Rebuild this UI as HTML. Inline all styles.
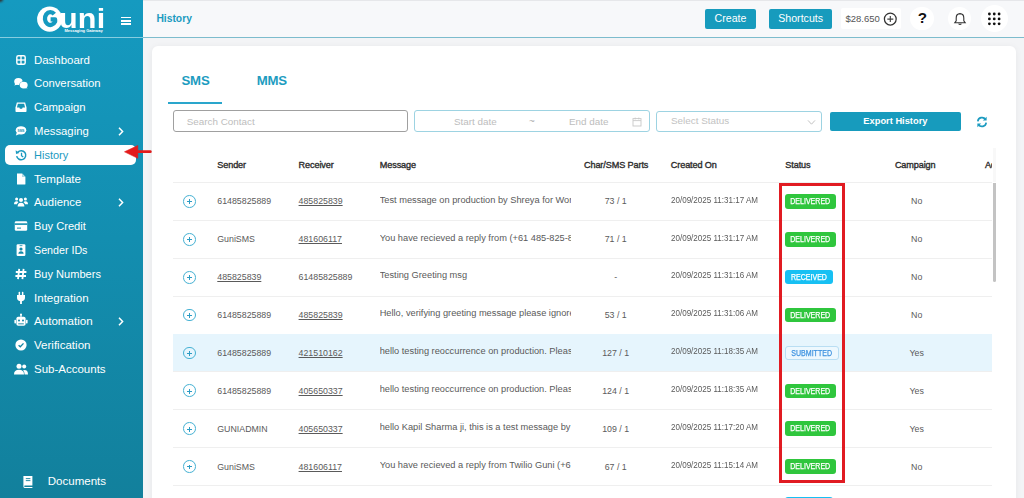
<!DOCTYPE html>
<html><head><meta charset="utf-8">
<style>

*{margin:0;padding:0;box-sizing:border-box}
html,body{width:1024px;height:498px;overflow:hidden;background:#f3f4f6;font-family:"Liberation Sans",sans-serif}
.a{position:absolute}
#side{position:absolute;left:0;top:0;width:143.3px;height:498px;background:linear-gradient(180deg,#159ac0 0%,#138eb0 48%,#12809c 100%)}
#side .hl{position:absolute;left:0;top:37px;width:143.3px;height:1px;background:#86cde0}
.mi{position:absolute;left:34px;height:16px;line-height:16px;font-size:11.3px;color:#fff;white-space:nowrap}
.ic{position:absolute;left:13px;width:16px;height:16px}
.chev{position:absolute;left:117px;width:8px;height:9px}
#top{position:absolute;left:143.3px;top:0;width:880.7px;height:37px;background:#f7f8fa;border-top:1px solid #e6e7ea}
#topline{position:absolute;left:143.3px;top:37px;width:880.7px;height:1px;background:#7dbccd}
.btn{position:absolute;background:#179bbd;color:#fff;border-radius:2px;font-size:10.6px;text-align:center}
#card{position:absolute;left:152px;top:46.2px;width:864px;height:470px;background:#fff;border-radius:6px;box-shadow:0 1px 7px rgba(0,0,0,.06)}
.th{position:absolute;top:157px;height:16px;line-height:16px;font-size:9.1px;color:#2b2b2b;white-space:nowrap;letter-spacing:-0.1px;-webkit-text-stroke:0.35px #2b2b2b}
.td{position:absolute;height:14px;line-height:14px;font-size:8.8px;color:#5a5a5a;white-space:nowrap}
.u{text-decoration:underline;text-underline-offset:1px}
.rb{position:absolute;left:172.7px;width:819.8px;height:1px;background:#efefef}
.badge{position:absolute;left:785.2px;height:14.6px;line-height:15.6px;border-radius:3px;font-size:8.2px;color:#fff;text-align:center;white-space:nowrap}
.badge span{display:inline-block;transform:scaleX(.86);-webkit-text-stroke:0.25px currentColor}
.del{background:#2fc63d;width:50.4px}
.rec{background:#17c0f3;width:48px}
.sub{background:#edf8fe;border:1px solid #b9def3;color:#3f93e0;width:53.6px;line-height:13.6px}
.exp{position:absolute;left:183px;width:12.7px;height:12.7px;border:1px solid #45b1d3;border-radius:50%}
.exp:before{content:"";position:absolute;left:5.2px;top:3.4px;width:1px;height:4.8px;background:#2d9cc4}
.exp:after{content:"";position:absolute;left:3.4px;top:5.2px;width:4.8px;height:1px;background:#2d9cc4}

</style></head><body>
<div id="side"><div class="hl"></div>
<div class="a" style="left:-4px;top:-4px;width:6.5px;height:5.5px;border-radius:50%;background:#333;filter:blur(0.8px)"></div>
<svg class="a" style="left:34px;top:3px" width="32" height="32" viewBox="0 0 32 32"><circle cx="15.7" cy="16.1" r="12.6" fill="#fff"/><path d="M20.3 11.2 A5.4 6.4 0 1 0 21.1 18.6 V16.4 H16.6" fill="none" stroke="#159ac0" stroke-width="4.3" stroke-linejoin="round"/></svg>
<div class="a" style="left:59.4px;top:0.9px;font-size:27px;line-height:36px;font-weight:bold;color:#fff;letter-spacing:0.2px;transform:scaleX(1.13);transform-origin:0 0">uni</div>
<div class="a" style="left:64.4px;top:27.6px;font-size:4.0px;line-height:5px;font-weight:bold;color:#fff;white-space:nowrap;letter-spacing:0px">Messaging Gateway</div>
<div class="a" style="left:121px;top:16.6px;width:10px;height:1.6px;background:#fff"></div>
<div class="a" style="left:121px;top:20.0px;width:10px;height:1.6px;background:#fff"></div>
<div class="a" style="left:121px;top:23.4px;width:10px;height:1.6px;background:#fff"></div>

<svg class="a" style="left:13px;top:51.6px" width="16" height="16" viewBox="0 0 16 16"><g transform="translate(8 8) scale(0.95) translate(-8 -8)"><rect x="3.6" y="3.6" width="8.8" height="8.8" rx="1.6" fill="none" stroke="#fff" stroke-width="1.5"/><rect x="7.3" y="3.6" width="1.4" height="8.8" fill="#fff"/><rect x="3.6" y="7.3" width="8.8" height="1.4" fill="#fff"/></g></svg>
<div class="mi" style="top:51.6px;color:#fff;font-size:11.45px">Dashboard</div>
<svg class="a" style="left:13px;top:75.4px" width="16" height="16" viewBox="0 0 16 16"><g transform="translate(8 8) scale(1) translate(-8 -8)"><ellipse cx="5.4" cy="6.6" rx="4.2" ry="3.5" fill="#fff"/><path d="M2.4 8.4 L1.3 10.4 L4.6 9.6Z" fill="#fff"/><ellipse cx="10.7" cy="10.1" rx="4.5" ry="3.8" fill="#1595b7"/><ellipse cx="10.7" cy="10.1" rx="4" ry="3.4" fill="#fff"/><path d="M13.2 12 L14.7 13.3 L11.6 13.2Z" fill="#fff"/></g></svg>
<div class="mi" style="top:75.4px;color:#fff;font-size:11.3px">Conversation</div>
<svg class="a" style="left:13px;top:99.2px" width="16" height="16" viewBox="0 0 16 16"><g transform="translate(8 8) scale(0.92) translate(-8 -8)"><path d="M3.5 3.2 H12.5 L14 8.6 V12.6 Q14 13.4 13.2 13.4 H2.8 Q2 13.4 2 12.6 V8.6 Z" fill="#fff"/><path d="M4.6 4.6 H11.4 L12.4 8.6 H9.8 L9.2 9.9 H6.8 L6.2 8.6 H3.6 Z" fill="#1594b5"/></g></svg>
<div class="mi" style="top:99.2px;color:#fff;font-size:11.3px">Campaign</div>
<svg class="a" style="left:13px;top:123.0px" width="16" height="16" viewBox="0 0 16 16"><g transform="translate(8 8) scale(0.88) translate(-8 -8)"><ellipse cx="8" cy="7.2" rx="6" ry="4.7" fill="#fff"/><path d="M3.2 9.6 L2.2 13 L6.4 11.4Z" fill="#fff"/><text x="8" y="8.6" font-size="3.6" font-weight="bold" fill="#1593b4" text-anchor="middle" font-family="Liberation Sans">SMS</text></g></svg>
<div class="mi" style="top:123.0px;color:#fff;font-size:11.33px">Messaging</div>
<svg class="a" style="left:116px;top:125.5px" width="10" height="11" viewBox="0 0 10 11"><path d="M3 1.8 L6.6 5.5 L3 9.2" stroke="#fff" stroke-width="1.5" fill="none"/></svg>
<div class="a" style="left:5px;top:144.8px;width:130.6px;height:19.9px;background:#fff;border-radius:5px"></div>
<svg class="a" style="left:13px;top:146.8px" width="16" height="16" viewBox="0 0 16 16"><g transform="translate(8 8) scale(0.86) translate(-8 -8)"><path d="M4.2 4.8 A5.3 5.3 0 1 1 3 9.2" fill="none" stroke="#1b9abf" stroke-width="1.7"/><path d="M1.8 2.6 L2.2 6.8 L6.2 5.6Z" fill="#1b9abf"/><path d="M8.6 5.4 V8.8 L10.6 10.4" fill="none" stroke="#1b9abf" stroke-width="1.5"/></g></svg>
<div class="mi" style="top:146.8px;color:#1b9abf;font-size:11.0px">History</div>
<svg class="a" style="left:13px;top:170.6px" width="16" height="16" viewBox="0 0 16 16"><g transform="translate(8 8) scale(1) translate(-8 -8)"><path d="M4 2.5 H9.2 L12.4 5.7 V13 Q12.4 13.6 11.8 13.6 H4.6 Q4 13.6 4 13 Z" fill="#fff"/><path d="M9 2.5 V6 H12.4" fill="#1594b5" opacity="0.35"/></g></svg>
<div class="mi" style="top:170.6px;color:#fff;font-size:11.6px">Template</div>
<svg class="a" style="left:13px;top:194.4px" width="16" height="16" viewBox="0 0 16 16"><g transform="translate(8 8) scale(1) translate(-8 -8)"><circle cx="8" cy="6" r="2" fill="#fff"/><circle cx="3.6" cy="5" r="1.5" fill="#fff"/><circle cx="12.4" cy="5" r="1.5" fill="#fff"/><path d="M4.6 12.6 Q4.6 8.7 8 8.7 Q11.4 8.7 11.4 12.6Z" fill="#fff"/><path d="M1 10.2 Q1 7.2 3.6 7.2 Q5 7.2 5.4 8.2 Q4 9.2 4 10.2Z" fill="#fff"/><path d="M15 10.2 Q15 7.2 12.4 7.2 Q11 7.2 10.6 8.2 Q12 9.2 12 10.2Z" fill="#fff"/></g></svg>
<div class="mi" style="top:194.4px;color:#fff;font-size:11.32px">Audience</div>
<svg class="a" style="left:116px;top:196.9px" width="10" height="11" viewBox="0 0 10 11"><path d="M3 1.8 L6.6 5.5 L3 9.2" stroke="#fff" stroke-width="1.5" fill="none"/></svg>
<svg class="a" style="left:13px;top:218.2px" width="16" height="16" viewBox="0 0 16 16"><g transform="translate(8 8) scale(1) translate(-8 -8)"><rect x="1.8" y="3.2" width="12.4" height="9.6" rx="1.4" fill="#fff"/><rect x="1.8" y="5.3" width="12.4" height="1.6" fill="#138ead"/><rect x="4" y="9.6" width="4" height="1" fill="#138ead"/></g></svg>
<div class="mi" style="top:218.2px;color:#fff;font-size:11.1px">Buy Credit</div>
<svg class="a" style="left:13px;top:242.0px" width="16" height="16" viewBox="0 0 16 16"><g transform="translate(8 8) scale(1) translate(-8 -8)"><rect x="3.6" y="2.2" width="8.8" height="11.8" rx="1.2" fill="#fff"/><circle cx="8" cy="7" r="1.6" fill="#128aa8"/><path d="M5.4 11.8 Q5.4 9.2 8 9.2 Q10.6 9.2 10.6 11.8Z" fill="#128aa8"/><rect x="6.6" y="3.3" width="2.8" height="0.8" fill="#128aa8"/></g></svg>
<div class="mi" style="top:242.0px;color:#fff;font-size:10.7px">Sender IDs</div>
<svg class="a" style="left:13px;top:265.8px" width="16" height="16" viewBox="0 0 16 16"><g transform="translate(8 8) scale(1) translate(-8 -8)"><path d="M6.2 2.8 L5 13.2 M10.6 2.8 L9.4 13.2 M2.8 6 H13.4 M2.4 10 H13" stroke="#fff" stroke-width="1.8" fill="none"/></g></svg>
<div class="mi" style="top:265.8px;color:#fff;font-size:11.05px">Buy Numbers</div>
<svg class="a" style="left:13px;top:289.6px" width="16" height="16" viewBox="0 0 16 16"><g transform="translate(8 8) scale(1) translate(-8 -8)"><rect x="5.6" y="1.8" width="1.5" height="3.6" rx="0.6" fill="#fff"/><rect x="8.9" y="1.8" width="1.5" height="3.6" rx="0.6" fill="#fff"/><path d="M4 5 H12 V7.6 Q12 10.8 8.9 11.2 V14 H7.1 V11.2 Q4 10.8 4 7.6Z" fill="#fff"/></g></svg>
<div class="mi" style="top:289.6px;color:#fff;font-size:11.55px">Integration</div>
<svg class="a" style="left:13px;top:313.4px" width="16" height="16" viewBox="0 0 16 16"><g transform="translate(8 8) scale(1) translate(-8 -8)"><rect x="7.3" y="1.2" width="1.4" height="2.6" fill="#fff"/><circle cx="8" cy="1.6" r="1" fill="#fff"/><rect x="3.4" y="3.8" width="9.2" height="9" rx="1.8" fill="#fff"/><rect x="1.4" y="6.8" width="1.6" height="3.6" rx="0.6" fill="#fff"/><rect x="13" y="6.8" width="1.6" height="3.6" rx="0.6" fill="#fff"/><circle cx="6" cy="7.4" r="1" fill="#1287a5"/><circle cx="10" cy="7.4" r="1" fill="#1287a5"/><rect x="5.2" y="10.4" width="5.6" height="0.9" fill="#1287a5"/></g></svg>
<div class="mi" style="top:313.40000000000003px;color:#fff;font-size:11.6px">Automation</div>
<svg class="a" style="left:116px;top:315.90000000000003px" width="10" height="11" viewBox="0 0 10 11"><path d="M3 1.8 L6.6 5.5 L3 9.2" stroke="#fff" stroke-width="1.5" fill="none"/></svg>
<svg class="a" style="left:13px;top:337.2px" width="16" height="16" viewBox="0 0 16 16"><g transform="translate(8 8) scale(1) translate(-8 -8)"><circle cx="8" cy="8" r="5.6" fill="#fff"/><path d="M5.6 8.2 L7.3 9.8 L10.5 6.4" stroke="#1285a2" stroke-width="1.3" fill="none"/></g></svg>
<div class="mi" style="top:337.20000000000005px;color:#fff;font-size:11.55px">Verification</div>
<svg class="a" style="left:13px;top:361.0px" width="16" height="16" viewBox="0 0 16 16"><g transform="translate(8 8) scale(1) translate(-8 -8)"><circle cx="6" cy="5.2" r="2.5" fill="#fff"/><circle cx="11.2" cy="5.6" r="2" fill="#fff"/><path d="M1 13.4 Q1 8.8 6 8.8 Q11 8.8 11 13.4Z" fill="#fff"/><path d="M11.6 13.4 Q11.6 10.6 10 9.4 Q10.6 9 11.4 9 Q15 9 15 13.4Z" fill="#fff"/></g></svg>
<div class="mi" style="top:361.00000000000006px;color:#fff;font-size:11.5px">Sub-Accounts</div>
<svg class="a" style="left:19.5px;top:473.5px" width="16" height="16" viewBox="0 0 16 16"><g transform="translate(8 8) scale(1) translate(-8 -8)"><path d="M3.4 2 H12.4 V11.4 H4.8 Q4.2 11.4 4.2 12.2 Q4.2 13 4.8 13 H12.4 V14 H4.6 Q3.4 14 3.4 12.6Z" fill="#fff"/><rect x="5.8" y="4.2" width="4.6" height="0.9" fill="#12809c"/><rect x="5.8" y="6.2" width="4.6" height="0.9" fill="#12809c"/></g></svg>
<div class="mi" style="left:47.7px;top:473.1px;font-size:11.55px">Documents</div>
</div>
<svg class="a" style="left:120px;top:140px" width="36" height="24" viewBox="0 0 36 24"><path d="M4.5 11.8 L17.8 5.5 L17.8 18.3 Z" fill="#e31b1b" stroke="#e31b1b" stroke-width="0.6" stroke-linejoin="round"/><path d="M17 11.65 H30.3" stroke="#e31b1b" stroke-width="2.9" stroke-linecap="round"/></svg>
<div id="top"></div><div id="topline"></div>
<div class="a" style="left:156.4px;top:11.2px;font-size:10.3px;line-height:16px;font-weight:bold;color:#1c9bc0">History</div>
<div class="btn" style="left:705px;top:8.8px;width:51px;height:19.8px;line-height:19.8px">Create</div>
<div class="btn" style="left:769px;top:8.8px;width:63.3px;height:19.8px;line-height:19.8px">Shortcuts</div>
<div class="a" style="left:841px;top:8.3px;width:60px;height:21px;background:#fff;border-radius:2px"></div>
<div class="a" style="left:845.4px;top:10.5px;font-size:9.5px;line-height:16px;color:#555">$28.650</div>
<svg class="a" style="left:883px;top:11.6px" width="15" height="15" viewBox="0 0 15 15"><circle cx="7.3" cy="7.1" r="5.9" fill="none" stroke="#333" stroke-width="1.25"/><path d="M7.3 4.1 V10.1 M4.3 7.1 H10.3" stroke="#444" stroke-width="1.15"/></svg>
<div class="a" style="left:910.4px;top:6.8px;width:23.4px;height:23.4px;border-radius:50%;background:#fff"></div>
<div class="a" style="left:910.6px;top:9.4px;width:23.4px;text-align:center;font-size:15.2px;line-height:18px;font-weight:bold;color:#111">?</div>
<div class="a" style="left:947.6px;top:6.6px;width:23.6px;height:23.6px;border-radius:50%;background:#fff"></div>
<svg class="a" style="left:952.6px;top:11.6px" width="14" height="14" viewBox="0 0 14 14"><path d="M7 1.6 Q3.2 1.8 3.2 6 V8.8 L1.8 10.8 H12.2 L10.8 8.8 V6 Q10.8 1.8 7 1.6Z" fill="none" stroke="#333" stroke-width="1.1"/><path d="M5.6 11.6 Q7 13.4 8.4 11.6" fill="none" stroke="#333" stroke-width="1.1"/></svg>
<div class="a" style="left:980.8px;top:5.1px;width:27px;height:27px;border-radius:50%;background:#fff"></div>

<svg class="a" style="left:980px;top:4px" width="28" height="28" viewBox="0 0 28 28"><circle cx="9.40" cy="10.00" r="1.4" fill="#111"/><circle cx="14.25" cy="10.00" r="1.4" fill="#111"/><circle cx="19.10" cy="10.00" r="1.4" fill="#111"/><circle cx="9.40" cy="14.90" r="1.4" fill="#111"/><circle cx="14.25" cy="14.90" r="1.4" fill="#111"/><circle cx="19.10" cy="14.90" r="1.4" fill="#111"/><circle cx="9.40" cy="19.80" r="1.4" fill="#111"/><circle cx="14.25" cy="19.80" r="1.4" fill="#111"/><circle cx="19.10" cy="19.80" r="1.4" fill="#111"/></svg>
<div id="card"></div>
<div class="a" style="left:181.5px;top:72.6px;font-size:13.2px;line-height:16px;color:#1d9cc0;font-weight:bold;letter-spacing:-0.2px">SMS</div>
<div class="a" style="left:256.8px;top:72.6px;font-size:13.2px;line-height:16px;color:#1d9cc0;font-weight:bold;letter-spacing:-0.2px">MMS</div>
<div class="a" style="left:168.3px;top:102.3px;width:53.5px;height:1.8px;background:#2aa6cc"></div>
<div class="a" style="left:172.6px;top:110.2px;width:235.6px;height:21.8px;border:1px solid #a0a0a0;border-radius:3px"></div>
<div class="a" style="left:186.7px;top:113.5px;font-size:9.9px;line-height:16px;color:#bdbdbd">Search Contact</div>
<div class="a" style="left:414.2px;top:110.2px;width:235.6px;height:21.6px;border:1px solid #9dd3e2;border-radius:3px"></div>
<div class="a" style="left:454px;top:113.5px;font-size:9.9px;line-height:16px;color:#bdbdbd">Start date</div>
<div class="a" style="left:529px;top:112.5px;font-size:9.9px;line-height:16px;color:#aaa">~</div>
<div class="a" style="left:569px;top:113.5px;font-size:9.9px;line-height:16px;color:#bdbdbd">End date</div>
<svg class="a" style="left:631.6px;top:116.6px" width="10" height="10" viewBox="0 0 10 10"><rect x="1" y="1.6" width="8" height="7.4" fill="none" stroke="#c8c8c8" stroke-width="0.9"/><path d="M1 3.6 H9 M3.2 0.6 V2.4 M6.8 0.6 V2.4" stroke="#c8c8c8" stroke-width="0.9"/></svg>
<div class="a" style="left:656.4px;top:111px;width:166px;height:21.4px;border:1px solid #9dd3e2;border-radius:3px"></div>
<div class="a" style="left:671px;top:113.3px;font-size:9.9px;line-height:16px;color:#c2c2c2">Select Status</div>
<svg class="a" style="left:806.6px;top:118.6px" width="9" height="7" viewBox="0 0 9 7"><path d="M1 1.4 L4.5 5.2 L8 1.4" stroke="#bbb" stroke-width="0.9" fill="none"/></svg>
<div class="btn" style="left:830px;top:111.6px;width:130.8px;height:19.2px;line-height:19.2px;font-size:9.3px;font-weight:bold;border-radius:2px">Export History</div>
<svg class="a" style="left:975.6px;top:116px" width="12" height="12" viewBox="0 0 12 12"><path d="M1.8 5.4 A4.3 4.3 0 0 1 9.6 3.4" fill="none" stroke="#1c9bc0" stroke-width="1.7"/><path d="M10.6 0.8 V4.6 H6.8Z" fill="#1c9bc0"/><path d="M10.2 6.6 A4.3 4.3 0 0 1 2.4 8.6" fill="none" stroke="#1c9bc0" stroke-width="1.7"/><path d="M1.4 11.2 V7.4 H5.2Z" fill="#1c9bc0"/></svg>

<div class="a" style="left:992.5px;top:148px;width:3.5px;height:34.4px;background:#f8f8f8"></div>
<div class="a" style="left:172.7px;top:140px;width:819.8px;height:360px;overflow:hidden">
<div class="th" style="left:44.6px;top:17px">Sender</div>
<div class="th" style="left:125.9px;top:17px">Receiver</div>
<div class="th" style="left:207.1px;top:17px">Message</div>
<div class="th" style="left:411.3px;top:17px">Char/SMS Parts</div>
<div class="th" style="left:498.1px;top:17px">Created On</div>
<div class="th" style="left:612.6px;top:17px">Status</div>
<div class="th" style="left:722.2px;top:17px">Campaign</div>
<div class="th" style="left:812.2px;top:17px">Ac</div>
<div class="rb" style="left:0;top:42px"></div>
<div class="rb" style="left:0;top:80px"></div>
<div class="exp" style="left:10.3px;top:55.09px"></div>
<div class="td" style="left:44.6px;top:54.44px">61485825889</div>
<div class="td u" style="left:125.9px;top:54.44px">485825839</div>
<div class="td" style="left:207.0px;top:52.74px;width:191.8px;overflow:hidden;font-size:9.25px">Test message on production by Shreya for WorkFlow testing</div>
<div class="td" style="left:407.3px;top:54.44px;width:71.4px;text-align:center">73 / 1</div>
<div class="td" style="left:498.1px;top:52.64px;font-size:8.9px;transform:scaleX(.905);transform-origin:0 0">20/09/2025 11:31:17 AM</div>
<div class="badge del" style="left:612.5px;top:54.14px"><span>DELIVERED</span></div>
<div class="td" style="left:724.0px;top:54.44px;width:40px;text-align:center">No</div>
<div class="rb" style="left:0;top:118px"></div>
<div class="exp" style="left:10.3px;top:92.96px"></div>
<div class="td" style="left:44.6px;top:92.31px">GuniSMS</div>
<div class="td u" style="left:125.9px;top:92.31px">481606117</div>
<div class="td" style="left:207.0px;top:90.61px;width:191.8px;overflow:hidden;font-size:9.25px">You have recieved a reply from (+61 485-825-839)</div>
<div class="td" style="left:407.3px;top:92.31px;width:71.4px;text-align:center">71 / 1</div>
<div class="td" style="left:498.1px;top:90.51px;font-size:8.9px;transform:scaleX(.905);transform-origin:0 0">20/09/2025 11:31:17 AM</div>
<div class="badge del" style="left:612.5px;top:92.01px"><span>DELIVERED</span></div>
<div class="td" style="left:724.0px;top:92.31px;width:40px;text-align:center">No</div>
<div class="rb" style="left:0;top:156px"></div>
<div class="exp" style="left:10.3px;top:130.84px"></div>
<div class="td u" style="left:44.6px;top:130.19px">485825839</div>
<div class="td" style="left:125.9px;top:130.19px">61485825889</div>
<div class="td" style="left:207.0px;top:128.49px;width:191.8px;overflow:hidden;font-size:9.25px">Testing Greeting msg</div>
<div class="td" style="left:407.3px;top:130.19px;width:71.4px;text-align:center">-</div>
<div class="td" style="left:498.1px;top:128.39px;font-size:8.9px;transform:scaleX(.905);transform-origin:0 0">20/09/2025 11:31:16 AM</div>
<div class="badge rec" style="left:612.5px;top:129.89px"><span>RECEIVED</span></div>
<div class="td" style="left:724.0px;top:130.19px;width:40px;text-align:center">No</div>
<div class="rb" style="left:0;top:194px"></div>
<div class="exp" style="left:10.3px;top:168.71px"></div>
<div class="td" style="left:44.6px;top:168.06px">61485825889</div>
<div class="td u" style="left:125.9px;top:168.06px">485825839</div>
<div class="td" style="left:207.0px;top:166.36px;width:191.8px;overflow:hidden;font-size:9.25px">Hello, verifying greeting message please ignore this</div>
<div class="td" style="left:407.3px;top:168.06px;width:71.4px;text-align:center">53 / 1</div>
<div class="td" style="left:498.1px;top:166.26px;font-size:8.9px;transform:scaleX(.905);transform-origin:0 0">20/09/2025 11:31:06 AM</div>
<div class="badge del" style="left:612.5px;top:167.76px"><span>DELIVERED</span></div>
<div class="td" style="left:724.0px;top:168.06px;width:40px;text-align:center">No</div>
<div class="a" style="left:0;top:194px;width:819.8px;height:37px;background:#e6f5fd"></div>
<div class="rb" style="left:0;top:231px"></div>
<div class="exp" style="left:10.3px;top:206.59px"></div>
<div class="td" style="left:44.6px;top:205.94px">61485825889</div>
<div class="td u" style="left:125.9px;top:205.94px">421510162</div>
<div class="td" style="left:207.0px;top:204.24px;width:191.8px;overflow:hidden;font-size:9.25px">hello testing reoccurrence on production. Please ignore</div>
<div class="td" style="left:407.3px;top:205.94px;width:71.4px;text-align:center">127 / 1</div>
<div class="td" style="left:498.1px;top:204.14px;font-size:8.9px;transform:scaleX(.905);transform-origin:0 0">20/09/2025 11:18:35 AM</div>
<div class="badge sub" style="left:612.5px;top:205.64px"><span>SUBMITTED</span></div>
<div class="td" style="left:724.0px;top:205.94px;width:40px;text-align:center">Yes</div>
<div class="rb" style="left:0;top:269px"></div>
<div class="exp" style="left:10.3px;top:244.46px"></div>
<div class="td" style="left:44.6px;top:243.81px">61485825889</div>
<div class="td u" style="left:125.9px;top:243.81px">405650337</div>
<div class="td" style="left:207.0px;top:242.11px;width:191.8px;overflow:hidden;font-size:9.25px">hello testing reoccurrence on production. Please ignore</div>
<div class="td" style="left:407.3px;top:243.81px;width:71.4px;text-align:center">124 / 1</div>
<div class="td" style="left:498.1px;top:242.01px;font-size:8.9px;transform:scaleX(.905);transform-origin:0 0">20/09/2025 11:18:35 AM</div>
<div class="badge del" style="left:612.5px;top:243.51px"><span>DELIVERED</span></div>
<div class="td" style="left:724.0px;top:243.81px;width:40px;text-align:center">Yes</div>
<div class="rb" style="left:0;top:307px"></div>
<div class="exp" style="left:10.3px;top:282.34px"></div>
<div class="td" style="left:44.6px;top:281.69px">GUNIADMIN</div>
<div class="td u" style="left:125.9px;top:281.69px">405650337</div>
<div class="td" style="left:207.0px;top:279.99px;width:191.8px;overflow:hidden;font-size:9.25px">hello Kapil Sharma ji, this is a test message by Shreya</div>
<div class="td" style="left:407.3px;top:281.69px;width:71.4px;text-align:center">109 / 1</div>
<div class="td" style="left:498.1px;top:279.89px;font-size:8.9px;transform:scaleX(.905);transform-origin:0 0">20/09/2025 11:17:20 AM</div>
<div class="badge del" style="left:612.5px;top:281.39px"><span>DELIVERED</span></div>
<div class="td" style="left:724.0px;top:281.69px;width:40px;text-align:center">Yes</div>
<div class="rb" style="left:0;top:345px"></div>
<div class="exp" style="left:10.3px;top:320.21px"></div>
<div class="td" style="left:44.6px;top:319.56px">GuniSMS</div>
<div class="td u" style="left:125.9px;top:319.56px">481606117</div>
<div class="td" style="left:207.0px;top:317.86px;width:191.8px;overflow:hidden;font-size:9.25px">You have recieved a reply from Twilio Guni (+61 485</div>
<div class="td" style="left:407.3px;top:319.56px;width:71.4px;text-align:center">67 / 1</div>
<div class="td" style="left:498.1px;top:317.76px;font-size:8.9px;transform:scaleX(.905);transform-origin:0 0">20/09/2025 11:15:14 AM</div>
<div class="badge del" style="left:612.5px;top:319.26px"><span>DELIVERED</span></div>
<div class="td" style="left:724.0px;top:319.56px;width:40px;text-align:center">No</div>
<div class="rb" style="left:0;top:383px"></div>
<div class="exp" style="left:10.3px;top:358.09px"></div>
<div class="td" style="left:44.6px;top:357.44px">GuniSMS</div>
<div class="td u" style="left:125.9px;top:357.44px">481606117</div>
<div class="td" style="left:207.0px;top:355.74px;width:191.8px;overflow:hidden;font-size:9.25px">You have recieved a reply</div>
<div class="td" style="left:407.3px;top:357.44px;width:71.4px;text-align:center">67 / 1</div>
<div class="td" style="left:498.1px;top:355.64px;font-size:8.9px;transform:scaleX(.905);transform-origin:0 0">20/09/2025 11:15:14 AM</div>
<div class="badge rec" style="left:612.5px;top:357.14px"><span>RECEIVED</span></div>
<div class="td" style="left:724.0px;top:357.44px;width:40px;text-align:center">No</div>
</div>
<div class="a" style="left:992.6px;top:182.8px;width:3.3px;height:99.4px;background:#c3c3c3;border-radius:0 0 2px 2px"></div>
<div class="a" style="left:779.4px;top:183.4px;width:65.3px;height:299.4px;border:3px solid #e11b22"></div>
</body></html>
